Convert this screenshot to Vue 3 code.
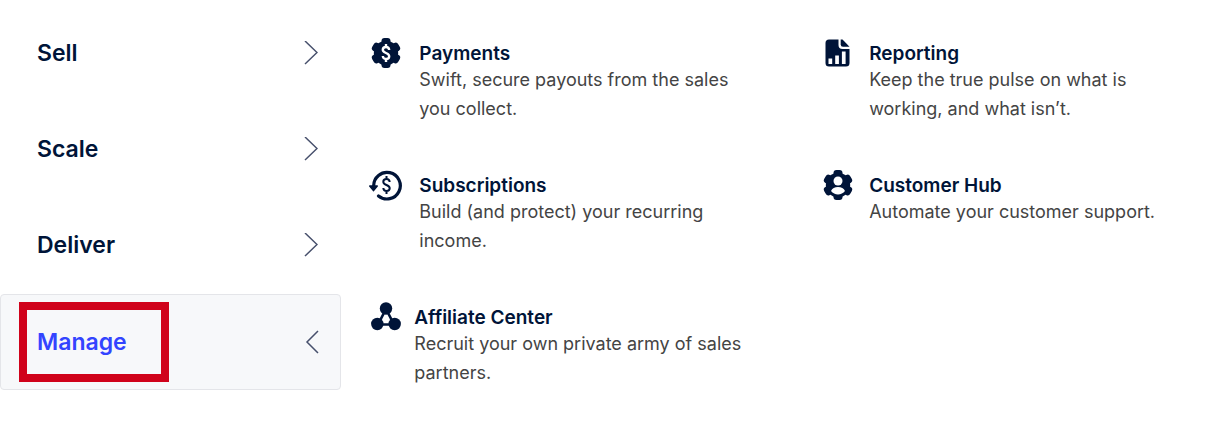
<script setup>
import { ref } from 'vue'

const sections = ['Sell', 'Scale', 'Deliver', 'Manage']
const active = ref('Manage')

const features = [
  { icon: 'payments', title: 'Payments', text: 'Swift, secure payouts from the sales you collect.' },
  { icon: 'reporting', title: 'Reporting', text: 'Keep the true pulse on what is working, and what isn’t.' },
  { icon: 'subscriptions', title: 'Subscriptions', text: 'Build (and protect) your recurring income.' },
  { icon: 'customers', title: 'Customer Hub', text: 'Automate your customer support.' },
  { icon: 'affiliates', title: 'Affiliate Center', text: 'Recruit your own private army of sales partners.' }
]
</script>

<template>
  <main class="menu">
    <nav class="sections" aria-label="Product areas">
      <button
        v-for="name in sections"
        :key="name"
        type="button"
        class="section"
        :class="{ active: name === active }"
        @click="active = name"
      >
        <span class="label">{{ name }}</span>
        <svg class="chevron" viewBox="0 0 14 24" aria-hidden="true">
          <path :d="name === active ? 'M13 1L2 12L13 23' : 'M1 0L13 11.5L1 23'" />
        </svg>
      </button>
    </nav>

    <section class="features">
      <a v-for="item in features" :key="item.title" href="#" class="feature" :class="item.icon">
        <svg class="icon" viewBox="-17 -17 34 34" aria-hidden="true">
          <g v-if="item.icon === 'payments' || item.icon === 'customers'">
            <circle r="12.2" />
            <rect x="-4.5" y="-15" width="9" height="30" rx="3" />
            <rect x="-4.5" y="-15" width="9" height="30" rx="3" transform="rotate(60)" />
            <rect x="-4.5" y="-15" width="9" height="30" rx="3" transform="rotate(120)" />
          </g>
          <g v-if="item.icon === 'payments'" class="cut-line">
            <path d="M3.2-3C3-5.2 1.8-6 0-6C-2-6-3.2-5-3.2-3.3C-3.2-1.2-1.5-.7 0 0C1.5.7 3.2 1.2 3.2 3.3C3.2 5 2 6 0 6C-1.8 6-3 5.2-3.2 3M0-9V-6M0 6V9" />
          </g>
          <g v-if="item.icon === 'customers'" class="cut">
            <circle cy="-4" r="4.5" />
            <path d="M-7 6C-6 3.2-3.2 2 0 2S6 3.2 7 6C5.2 8.3 2.8 9.5 0 9.5S-5.2 8.3-7 6Z" />
          </g>
          <g v-if="item.icon === 'subscriptions'">
            <path class="ring" d="M-12.3 1A13.3 13.3 0 1 1-7.5 10.9" />
            <path class="arrow" d="M-16.2 1H-8.8L-12.5 5.6Z" />
            <path class="dollar" d="M3.7-3C3.5-5.2 2.3-6 .5-6C-1.5-6-2.7-5-2.7-3.3C-2.7-1.2-1 -.7.5 0C2 .7 3.7 1.2 3.7 3.3C3.7 5 2.5 6 .5 6C-1.3 6-2.5 5.2-2.7 3M.5-9V-6M.5 6V9" />
          </g>
          <g v-if="item.icon === 'affiliates'">
            <path class="links" d="M0-8L-8 7.5H8Z" />
            <circle cy="-8.5" r="6.2" />
            <circle cx="-8.7" cy="7" r="6.2" />
            <circle cx="8.7" cy="7" r="6.2" />
          </g>
          <g v-if="item.icon === 'reporting'">
            <path d="M-9-13.5H.5V-8Q.5-4 4.5-4H11.5V10Q11.5 13.5 8 13.5H-9Q-12.5 13.5-12.5 10V-10Q-12.5-13.5-9-13.5Z" />
            <path d="M2.7-13.5H4.5L11.5-6.2H5Q2.7-6.2 2.7-8.5Z" />
            <path class="cut" d="M-9.5 5.5H-5.8V11H-9.5ZM-2.8 2.5H.9V11H-2.8ZM3.9-1.5H7.6V11H3.9Z" />
          </g>
        </svg>
        <span class="copy">
          <strong>{{ item.title }}</strong>
          <span class="text">{{ item.text }}</span>
        </span>
      </a>
    </section>
  </main>
</template>

<style>
body {
  margin: 0;
  background: #fff;
}
</style>

<style scoped>
.menu {
  display: grid;
  grid-template-columns: 28% 1fr;
  gap: 28px;
  align-items: start;
  padding: 6px 0 16px;
  font-family: Inter, "Liberation Sans", sans-serif;
  color: #001438;
}
.sections {
  display: flex;
  flex-direction: column;
}
.section {
  position: relative;
  box-sizing: border-box;
  display: flex;
  align-items: center;
  justify-content: space-between;
  height: 96px;
  padding: 0 22px 2px 36px;
  border: 1px solid transparent;
  border-radius: 4px;
  background: none;
  color: inherit;
  font: 600 23px/32px Inter, "Liberation Sans", sans-serif;
  text-align: left;
  cursor: pointer;
}
.section.active {
  padding: 0 21px 0 36px;
  border-color: #e4e5e9;
  background: #f7f8fa;
}
.active .label {
  color: #3344ff;
}
.active::before {
  content: "";
  position: absolute;
  top: 7px;
  left: 18px;
  box-sizing: border-box;
  width: 150px;
  height: 80px;
  border: 8px solid #d0021b;
}
.chevron {
  width: 14px;
  height: 24px;
  fill: none;
  stroke: #47506c;
  stroke-width: 1.5;
}
.features {
  display: grid;
  grid-template-columns: 1fr 1fr;
  gap: 45px 54px;
  padding-top: 30px;
}
.feature {
  display: flex;
  align-items: flex-start;
  gap: 16px;
  color: inherit;
  text-decoration: none;
}
.reporting,
.customers {
  gap: 14px;
}
.affiliates {
  gap: 11px;
}
.icon {
  flex: none;
  width: 34px;
  height: 34px;
  fill: #001438;
}
.cut {
  fill: #fff;
}
.cut-line,
.ring,
.dollar,
.links {
  fill: none;
  stroke: #001438;
  stroke-width: 2;
}
.cut-line {
  stroke: #fff;
  stroke-width: 2.4;
}
.ring {
  stroke-width: 3.2;
  stroke-linecap: round;
}
.arrow {
  stroke: #001438;
  stroke-width: 1.6;
  stroke-linejoin: round;
}
.links {
  stroke-width: 2.6;
}
.copy {
  display: flex;
  flex-direction: column;
  max-width: 332px;
  padding-top: 6px;
}
.copy strong {
  font-size: 19px;
  font-weight: 600;
  line-height: 23px;
}
.text {
  color: #444;
  font-size: 18px;
  line-height: 29px;
}
</style>
